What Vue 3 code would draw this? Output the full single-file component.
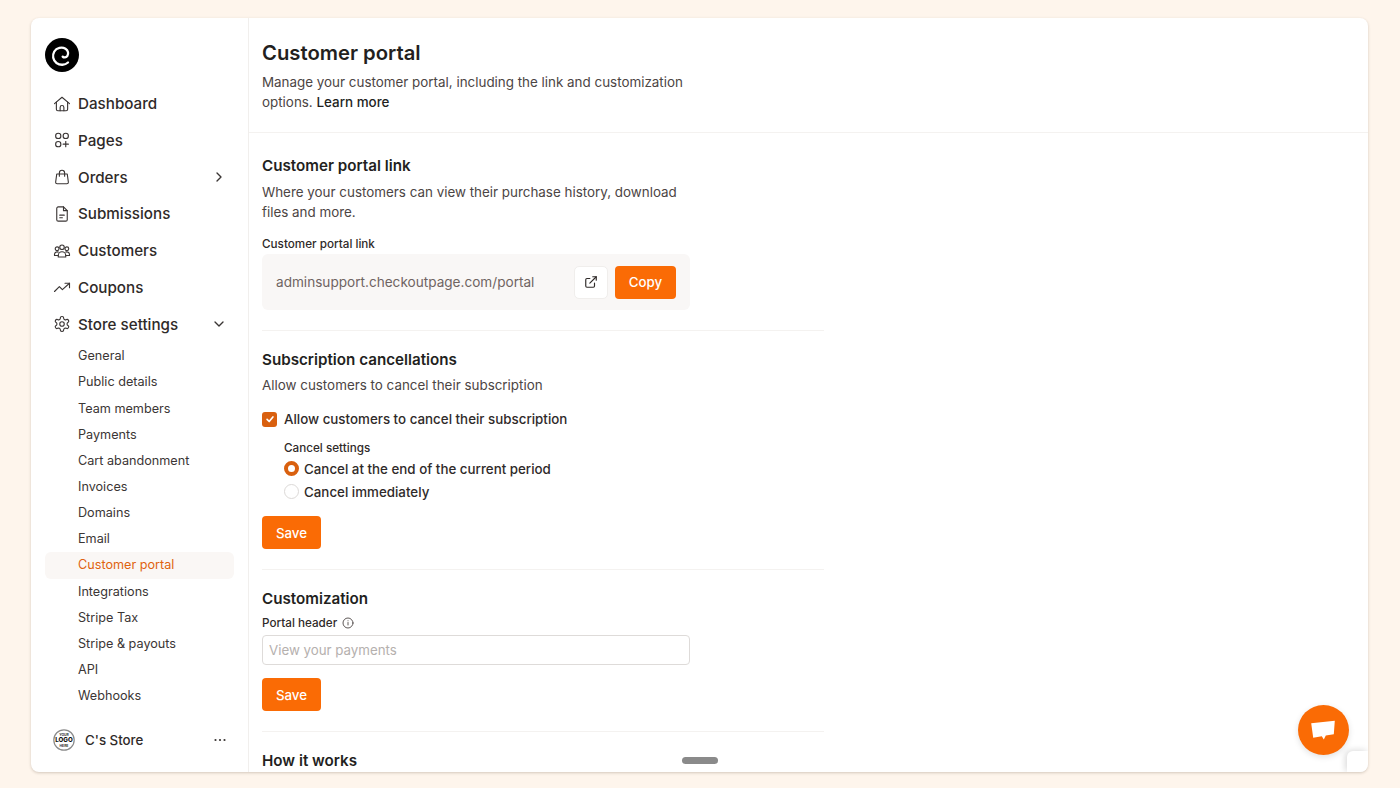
<template>
  <div class="page">
    <div class="card">
      <aside class="sidebar">
        <div class="logo">
          <svg width="34" height="34" viewBox="0 0 34 34">
            <circle cx="17" cy="17" r="17" fill="#000" />
            <path d="M23 24.500C20 27.300 15 27.500 11.500 25 8 22.300 7 17.500 9.300 13.500 11.500 9.800 17 8.700 20.500 10.800 23.300 12.500 23.800 15.800 22.300 18 21 19.700 18.800 19.800 17.700 18.600" fill="none" stroke="#fff" stroke-width="2.300" stroke-linecap="round" />
          </svg>
        </div>
        <nav class="nav">
          <a v-for="item in mainNav" :key="item.label" class="nav-item">
            <svg class="nav-icon" width="18" height="18" viewBox="0 0 24 24" fill="none" stroke="#3a3534" stroke-width="1.500" stroke-linecap="round" stroke-linejoin="round">
              <path v-for="(d, i) in item.paths" :key="i" :d="d" />
            </svg>
            <span>{{ item.label }}</span>
            <svg v-if="item.chevron" class="chevron" width="16" height="16" viewBox="0 0 24 24" fill="none" stroke="#3a3534" stroke-width="2" stroke-linecap="round" stroke-linejoin="round">
              <path :d="item.chevron" />
            </svg>
          </a>
        </nav>
        <div class="subnav">
          <a v-for="sub in subNav" :key="sub" class="sub-item" :class="{ active: sub === 'Customer portal' }">{{ sub }}</a>
        </div>
        <div class="store">
          <svg class="store-logo" width="22" height="22" viewBox="0 0 22 22">
            <circle cx="11" cy="11" r="10.200" fill="#fff" stroke="#8a8a8a" stroke-width="1.200" />
            <text x="11" y="6.500" class="logo-small">YOUR</text>
            <text x="11" y="13.300" class="logo-big">LOGO</text>
            <text x="11" y="18.200" class="logo-small">HERE</text>
          </svg>
          <span class="store-name">C's Store</span>
          <svg class="dots" width="12" height="4" viewBox="0 0 12 4" fill="#3a3534">
            <circle cx="1.500" cy="2" r="1.100" /><circle cx="6" cy="2" r="1.100" /><circle cx="10.500" cy="2" r="1.100" />
          </svg>
        </div>
      </aside>

      <main class="main">
        <header class="header">
          <h1>Customer portal</h1>
          <p class="desc">Manage your customer portal, including the link and customization options. <a class="learn">Learn more</a></p>
        </header>
        <div class="content">
          <section class="section first">
            <h2>Customer portal link</h2>
            <p class="desc">Where your customers can view their purchase history, download files and more.</p>
            <label class="label link-label">Customer portal link</label>
            <div class="link-box">
              <span class="link-text">adminsupport.checkoutpage.com/portal</span>
              <button class="icon-btn">
                <svg width="14" height="14" viewBox="0 0 24 24" fill="none" stroke="#2f2a29" stroke-width="2" stroke-linecap="round" stroke-linejoin="round">
                  <path d="M18 14v5a2 2 0 0 1-2 2H5a2 2 0 0 1-2-2V8a2 2 0 0 1 2-2h5" />
                  <path d="M15 3h6v6" /><path d="M10 14 21 3" />
                </svg>
              </button>
              <button class="btn copy">Copy</button>
            </div>
          </section>

          <section class="section">
            <h2>Subscription cancellations</h2>
            <p class="desc one">Allow customers to cancel their subscription</p>
            <div class="check-row">
              <span class="checkbox">
                <svg width="10" height="10" viewBox="0 0 12 12" fill="none" stroke="#fff" stroke-width="2" stroke-linecap="round" stroke-linejoin="round"><path d="M2.500 6.500 5 9l4.500-5.500" /></svg>
              </span>
              <span>Allow customers to cancel their subscription</span>
            </div>
            <div class="cancel-settings">
              <label class="label">Cancel settings</label>
              <div class="radio-row"><span class="radio on"></span><span>Cancel at the end of the current period</span></div>
              <div class="radio-row"><span class="radio"></span><span>Cancel immediately</span></div>
            </div>
            <button class="btn save">Save</button>
          </section>

          <section class="section">
            <h2 class="tight">Customization</h2>
            <label class="label with-icon">
              Portal header
              <svg width="12" height="12" viewBox="0 0 24 24" fill="none" stroke="#4c4544" stroke-width="1.800" stroke-linecap="round">
                <circle cx="12" cy="12" r="10" /><path d="M12 11v5" /><path d="M12 7.500v.1" />
              </svg>
            </label>
            <input class="input" placeholder="View your payments" />
            <button class="btn save input-save">Save</button>
          </section>

          <section class="section last">
            <h2>How it works</h2>
          </section>
        </div>
        <div class="scroll-handle"></div>
        <button class="chat">
          <svg width="26" height="22" viewBox="0 0 26 22" fill="#fff">
            <path d="M.2 4.300 23.800 1.700 22.800 15.300 14.800 16.400 12.800 20.500 10.800 17.200 2.200 18.700Z" />
          </svg>
        </button>
        <div class="corner"></div>
      </main>
    </div>
  </div>
</template>

<script setup>
const mainNav = [
  {
    label: 'Dashboard',
    paths: ['M2 11.500 12 3l10 8.500', 'M4.500 9.500V19a2 2 0 0 0 2 2h11a2 2 0 0 0 2-2V9.500', 'M9.500 21v-4.500a2.500 2.500 0 0 1 5 0V21'],
  },
  {
    label: 'Pages',
    paths: [
      'M7 3a3.500 3.500 0 1 0 0 7 3.500 3.500 0 0 0 0-7Z',
      'M17 3a3.500 3.500 0 1 0 0 7 3.500 3.500 0 0 0 0-7Z',
      'M7 14a3.500 3.500 0 1 0 0 7 3.500 3.500 0 0 0 0-7Z',
      'M17 14v7',
      'M13.500 17.500h7',
    ],
  },
  {
    label: 'Orders',
    chevron: 'm9 6 6 6-6 6',
    paths: ['M5 8h14l1.500 11a2 2 0 0 1-2 2h-13a2 2 0 0 1-2-2Z', 'M8.500 11V6.500a3.500 3.500 0 0 1 7 0V11'],
  },
  {
    label: 'Submissions',
    paths: ['M14 2.500H7a2 2 0 0 0-2 2v15a2 2 0 0 0 2 2h10a2 2 0 0 0 2-2V7.500Z', 'M14 2.500v5h5', 'M9 13.500h6', 'M9 17h3.500'],
  },
  {
    label: 'Customers',
    paths: [
      'M12 4a3 3 0 1 0 0 6 3 3 0 0 0 0-6Z',
      'M5.500 6.500a2.500 2.500 0 1 0 0 5 2.500 2.500 0 0 0 0-5Z',
      'M18.500 6.500a2.500 2.500 0 1 0 0 5 2.500 2.500 0 0 0 0-5Z',
      'M7 20v-2a5 5 0 0 1 10 0v2Z',
      'M7 18H2v-1.500a3.500 3.500 0 0 1 5-3',
      'M17 18h5v-1.500a3.500 3.500 0 0 0-5-3',
    ],
  },
  {
    label: 'Coupons',
    paths: ['M2 18l6.500-6.500 4 4L22 7', 'M16 7h6v6'],
  },
  {
    label: 'Store settings',
    chevron: 'm6 9 6 6 6-6',
    paths: [
      'M12.200 2h-.4a2 2 0 0 0-2 2v.2a2 2 0 0 1-1 1.700l-.4.3a2 2 0 0 1-2 0l-.2-.1a2 2 0 0 0-2.700.7l-.2.4a2 2 0 0 0 .7 2.700l.2.1a2 2 0 0 1 1 1.700v.5a2 2 0 0 1-1 1.700l-.2.1a2 2 0 0 0-.7 2.700l.2.4a2 2 0 0 0 2.700.7l.2-.1a2 2 0 0 1 2 0l.4.300a2 2 0 0 1 1 1.700v.2a2 2 0 0 0 2 2h.4a2 2 0 0 0 2-2v-.2a2 2 0 0 1 1-1.700l.4-.3a2 2 0 0 1 2 0l.2.1a2 2 0 0 0 2.700-.7l.2-.4a2 2 0 0 0-.7-2.700l-.2-.1a2 2 0 0 1-1-1.700v-.5a2 2 0 0 1 1-1.700l.2-.1a2 2 0 0 0 .7-2.700l-.2-.4a2 2 0 0 0-2.700-.7l-.2.1a2 2 0 0 1-2 0l-.4-.3a2 2 0 0 1-1-1.700V4a2 2 0 0 0-2-2Z',
      'M12 9a3 3 0 1 0 0 6 3 3 0 0 0 0-6Z',
    ],
  },
]

const subNav = [
  'General',
  'Public details',
  'Team members',
  'Payments',
  'Cart abandonment',
  'Invoices',
  'Domains',
  'Email',
  'Customer portal',
  'Integrations',
  'Stripe Tax',
  'Stripe & payouts',
  'API',
  'Webhooks',
]
</script>

<style>
html,
body {
  margin: 0;
  background: #fef5ec;
}
</style>

<style scoped>
.page {
  height: 788px;
  box-sizing: border-box;
  padding: 18px 32px 16px 31px;
  background: #fef5ec;
  font-family: Inter, "Liberation Sans", sans-serif;
  color: #2a2524;
  overflow: hidden;
}

.card {
  display: flex;
  height: 754px;
  background: #fff;
  border-radius: 8px;
  box-shadow: 0 1px 3px rgba(60, 40, 20, 0.22);
  overflow: hidden;
}

.sidebar {
  display: flex;
  flex-direction: column;
  box-sizing: border-box;
  width: 218px;
  flex-shrink: 0;
  padding: 20px 14px 0;
  border-right: 1px solid #f1efed;
}

.logo {
  height: 34px;
  margin-bottom: 13.300px;
}

.logo svg {
  display: block;
}

.nav-item {
  display: flex;
  align-items: center;
  height: 36.750px;
  padding-left: 7.500px;
  gap: 7.500px;
  font-size: 15.200px;
  font-weight: 500;
  color: #2f2a29;
}

.nav-icon {
  flex-shrink: 0;
}

.chevron {
  margin-left: auto;
  margin-right: 7px;
}

.subnav {
  display: flex;
  flex-direction: column;
  margin-top: 0.700px;
}

.sub-item {
  display: block;
  height: 26.150px;
  line-height: 26.150px;
  padding-left: 33px;
  font-size: 12.650px;
  color: #3b3635;
  border-radius: 6px;
}

.sub-item.active {
  background: #faf7f5;
  color: #e0630f;
}

.store {
  display: flex;
  align-items: center;
  margin-top: 20px;
  padding-left: 8px;
}

.store-logo {
  flex-shrink: 0;
}

.logo-small {
  font-size: 3.400px;
  font-weight: 700;
  text-anchor: middle;
  fill: #333;
}

.logo-big {
  font-size: 6.200px;
  font-weight: 800;
  text-anchor: middle;
  fill: #111;
}

.store-name {
  margin-left: 10px;
  font-size: 13.300px;
  font-weight: 500;
  color: #2f2a29;
}

.dots {
  margin-left: auto;
  margin-right: 8px;
}

.main {
  position: relative;
  flex: 1;
  min-width: 0;
  overflow: hidden;
}

.header {
  box-sizing: border-box;
  height: 115px;
  padding: 23px 13px 0;
  border-bottom: 1px solid #f4f2f0;
}

h1 {
  margin: 0 0 7px;
  font-size: 20.250px;
  line-height: 24px;
  font-weight: 600;
  color: #231f1e;
}

h2 {
  margin: 0 0 5px;
  font-size: 15.200px;
  line-height: 20px;
  font-weight: 600;
  color: #231f1e;
}

h2.tight {
  margin-bottom: 6px;
}

.section.first h2 {
  margin-bottom: 6px;
}

.desc {
  width: 440px;
  margin: 0;
  font-size: 13.400px;
  line-height: 20px;
  color: #4c4544;
}

.desc.one {
  margin-bottom: 14px;
}

.learn {
  color: #231f1e;
  font-weight: 500;
}

.content {
  width: 562px;
  padding: 22.500px 0 0 13px;
}

.section {
  padding: 19px 0 20px;
  border-bottom: 1px solid #f4f2f0;
}

.section.first {
  padding-top: 0;
  padding-bottom: 20px;
}

.section.last {
  border-bottom: none;
}

.label {
  display: block;
  font-size: 11.700px;
  line-height: 16px;
  font-weight: 500;
  color: #2f2a29;
}

.link-label {
  margin-top: 14px;
  margin-bottom: 2.500px;
}

.with-icon {
  display: flex;
  align-items: center;
  gap: 5px;
  margin-bottom: 4px;
}

.link-box {
  display: flex;
  align-items: center;
  box-sizing: border-box;
  width: 428px;
  height: 56px;
  padding: 0 14px;
  border-radius: 6px;
  background: #f9f7f6;
}

.link-text {
  flex: 1;
  font-size: 13.600px;
  color: #6f6462;
}

.icon-btn {
  display: flex;
  align-items: center;
  justify-content: center;
  box-sizing: border-box;
  width: 34px;
  height: 33px;
  margin-right: 7px;
  padding: 0;
  background: #fff;
  border: 1px solid #f0eeec;
  border-radius: 5px;
}

.btn {
  box-sizing: border-box;
  height: 33px;
  padding: 0;
  border: none;
  border-radius: 4px;
  background: #fa6b05;
  color: #fff;
  font-family: inherit;
  font-size: 13.300px;
  font-weight: 500;
}

.copy {
  width: 61px;
}

.save {
  display: block;
  width: 59px;
}

.check-row {
  display: flex;
  align-items: center;
  gap: 7px;
  font-size: 13.350px;
  font-weight: 500;
  line-height: 20px;
  color: #2f2a29;
}

.checkbox {
  display: flex;
  align-items: center;
  justify-content: center;
  width: 15px;
  height: 15px;
  border-radius: 3px;
  background: #d9600f;
}

.cancel-settings {
  margin: 11px 0 13px 22px;
}

.cancel-settings .label {
  margin-bottom: 1px;
}

.radio-row {
  display: flex;
  align-items: center;
  gap: 5px;
  height: 23px;
  font-size: 13.350px;
  font-weight: 500;
  color: #2f2a29;
}

.radio {
  box-sizing: border-box;
  width: 15px;
  height: 15px;
  border: 1px solid #dcd9d7;
  border-radius: 50%;
  background: #fff;
}

.radio.on {
  border: 4px solid #d9600f;
}

.input {
  display: block;
  box-sizing: border-box;
  width: 428px;
  height: 30px;
  padding: 0 6px;
  border: 1px solid #dedbd9;
  border-radius: 4px;
  font-family: inherit;
  font-size: 13.300px;
  outline: none;
}

.input::placeholder {
  color: #b5b0ae;
}

.input-save {
  margin-top: 13px;
}

.scroll-handle {
  position: absolute;
  left: 433px;
  top: 739px;
  width: 36px;
  height: 7px;
  border-radius: 4px;
  background: #8a8a8a;
}

.chat {
  position: absolute;
  right: 19px;
  bottom: 17px;
  display: flex;
  align-items: center;
  justify-content: center;
  width: 51px;
  height: 50px;
  padding: 0;
  border: none;
  border-radius: 50%;
  background: #fa6b05;
  box-shadow: 0 2px 6px rgba(0, 0, 0, 0.12);
}

.corner {
  position: absolute;
  right: 0;
  bottom: 0;
  width: 21px;
  height: 21px;
  background: #fff;
  border-top-left-radius: 6px;
  box-shadow: -2px -1px 6px rgba(0, 0, 0, 0.14);
}
</style>
